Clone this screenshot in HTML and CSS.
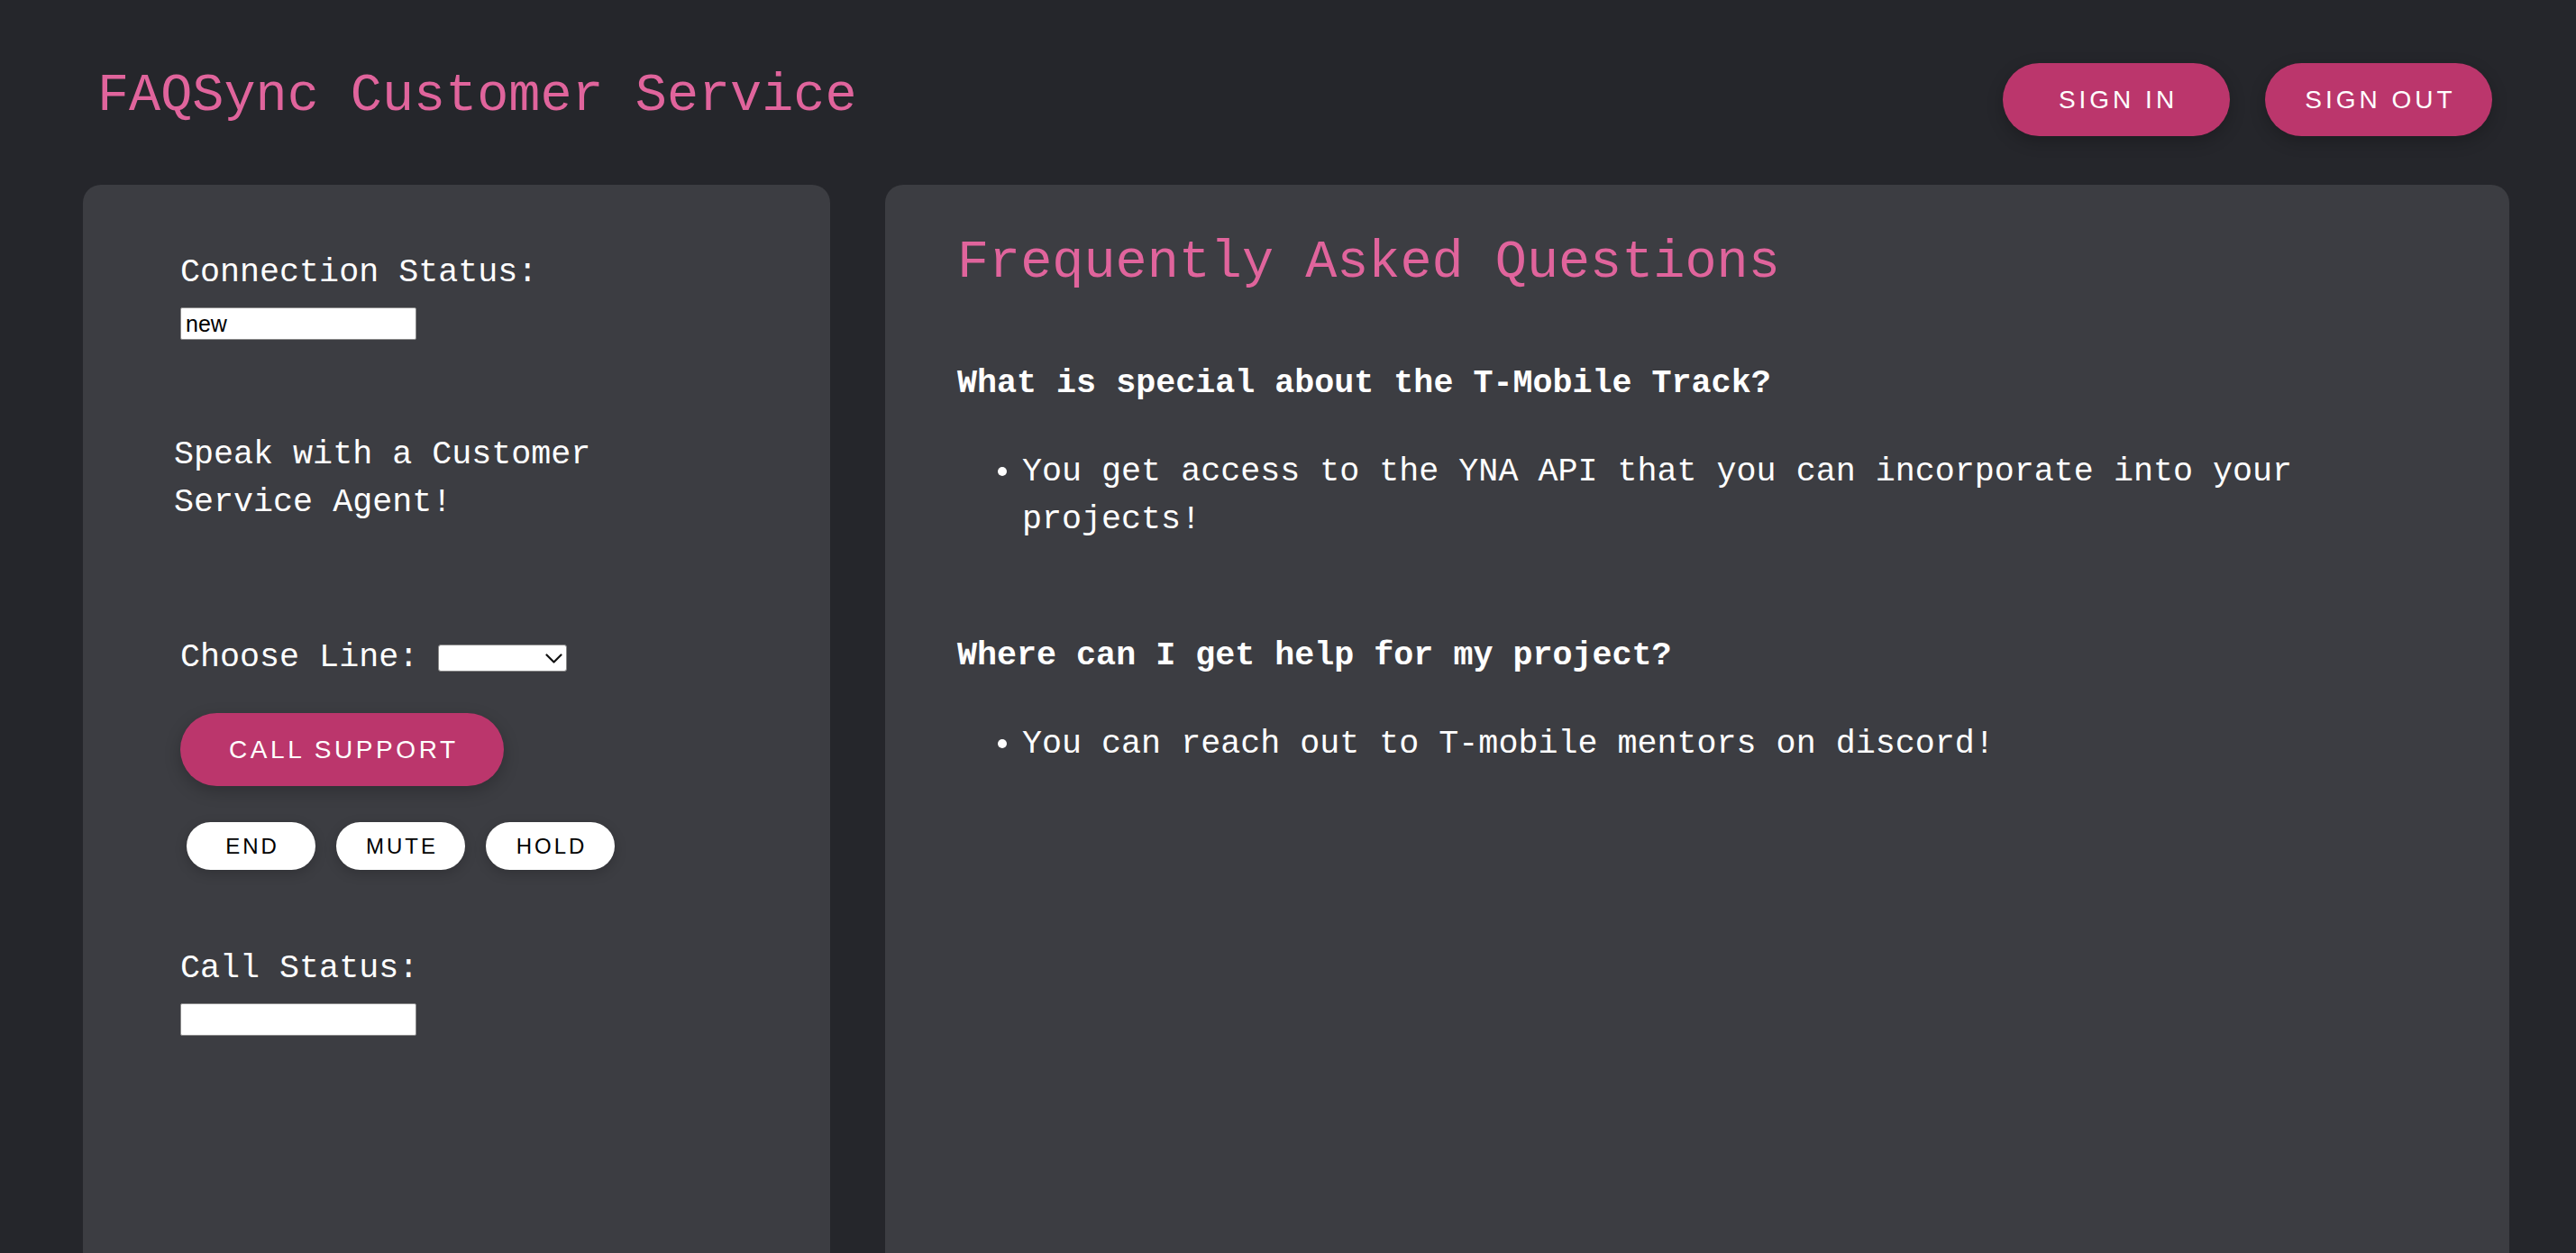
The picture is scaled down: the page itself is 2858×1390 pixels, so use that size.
FILE: index.html
```html
<!DOCTYPE html>
<html lang="en">
<head>
<meta charset="utf-8">
<title>FAQSync Customer Service</title>
<link rel="stylesheet" href="styles.css">
</head>
<body>
<div class="app">
  <header class="topbar">
    <h1 class="brand">FAQSync Customer Service</h1>
    <div class="auth">
      <button class="pill pill-pink pill-auth">SIGN IN</button>
      <button class="pill pill-pink pill-auth">SIGN OUT</button>
    </div>
  </header>
  <main class="content">
    <section class="panel panel-call">
      <label class="label label-first">Connection Status:</label>
      <input class="status-input" type="text" value="new" readonly>
      <p class="speak">Speak with a Customer Service Agent!</p>
      <div class="line-row">
        <label class="label">Choose Line:</label>
        <div class="select-wrap">
          <select class="line-select"><option></option></select>
          <svg class="select-chevron" width="19" height="11" viewBox="0 0 19 11" aria-hidden="true">
            <path d="M1.5 1.5 L9.5 9.5 L17.5 1.5" fill="none" stroke="#111" stroke-width="2.2" stroke-linecap="round" stroke-linejoin="round"/>
          </svg>
        </div>
      </div>
      <button class="pill pill-pink pill-call">CALL SUPPORT</button>
      <div class="call-controls">
        <button class="pill pill-white">END</button>
        <button class="pill pill-white">MUTE</button>
        <button class="pill pill-white">HOLD</button>
      </div>
      <label class="label label-call-status">Call Status:</label>
      <input class="status-input status-input-call" type="text" value="" readonly>
    </section>
    <section class="panel panel-faq">
      <h2 class="faq-title">Frequently Asked Questions</h2>
      <div class="faq-item">
        <h3 class="question">What is special about the T-Mobile Track?</h3>
        <ul class="answers">
          <li>You get access to the YNA API that you can incorporate into your projects!</li>
        </ul>
      </div>
      <div class="faq-item">
        <h3 class="question">Where can I get help for my project?</h3>
        <ul class="answers">
          <li>You can reach out to T-mobile mentors on discord!</li>
        </ul>
      </div>
    </section>
  </main>
</div>
</body>
</html>
```

FILE: styles.css
```css
* {
  box-sizing: border-box;
}

html, body {
  margin: 0;
  padding: 0;
  background: #25262b;
  overflow: hidden;
}

body {
  font-family: "Liberation Mono", "DejaVu Sans Mono", monospace;
  color: #ffffff;
}

.app {
  margin: 0 74px 0 92px;
}

.topbar {
  height: 205px;
  display: flex;
  justify-content: space-between;
  align-items: flex-start;
  padding: 70px 19px 0 16px;
}

.brand {
  margin: 2px 0 0;
  font-size: 58.5px;
  line-height: 70px;
  font-weight: 400;
  color: #e0649c;
}

.auth {
  display: flex;
  gap: 39px;
}

.pill {
  border: none;
  border-radius: 999px;
  font-family: "Liberation Sans", Arial, sans-serif;
  cursor: pointer;
  display: flex;
  align-items: center;
  justify-content: center;
  padding: 0;
}

.pill-pink {
  background: #bb366c;
  color: #ffffff;
  box-shadow: 0 6px 18px rgba(0, 0, 0, 0.22);
}

.pill-auth {
  width: 252px;
  height: 81px;
  font-size: 28px;
  letter-spacing: 4px;
  text-indent: 4px;
}

.content {
  display: flex;
  gap: 61px;
  align-items: flex-start;
}

.panel {
  background: #3c3d42;
  border-radius: 20px;
  height: 1300px;
}

.panel-call {
  width: 829px;
  flex: none;
  padding: 71px 108px 0;
  display: flex;
  flex-direction: column;
  align-items: flex-start;
}

.label {
  font-size: 36.7px;
  line-height: 53px;
  display: block;
}

.status-input {
  display: block;
  margin-top: 12px;
  width: 262px;
  height: 36px;
  background: #ffffff;
  border: 1px solid #8a8a8a;
  border-radius: 2px;
  font-family: "Liberation Sans", Arial, sans-serif;
  font-size: 25px;
  color: #000000;
  padding: 0 5px;
  outline: none;
}

.speak {
  margin: 101px 0 0 -7px;
  max-width: 600px;
  font-size: 36.7px;
  line-height: 53px;
}

.line-row {
  margin-top: 119px;
  display: flex;
  align-items: center;
  gap: 22px;
}

.select-wrap {
  position: relative;
  width: 143px;
  height: 30px;
}

.line-select {
  display: block;
  width: 143px;
  height: 30px;
  background: #ffffff;
  border: 1px solid #8a8a8a;
  border-radius: 3px;
  font-size: 20px;
  color: #000000;
  -webkit-appearance: none;
  appearance: none;
}

.select-chevron {
  position: absolute;
  right: 5px;
  top: 10px;
  pointer-events: none;
}

.pill-call {
  margin-top: 35px;
  width: 359px;
  height: 81px;
  font-size: 28px;
  letter-spacing: 3.6px;
  text-indent: 3.6px;
}

.call-controls {
  margin: 40px 0 0 7px;
  display: flex;
  gap: 23px;
}

.pill-white {
  width: 143px;
  height: 53px;
  background: #ffffff;
  color: #000000;
  font-size: 24px;
  letter-spacing: 3px;
  text-indent: 3px;
  box-shadow: 0 4px 14px rgba(0, 0, 0, 0.18);
}

.label-call-status {
  margin-top: 83px;
}

.status-input-call {
  margin-top: 12px;
}

.panel-faq {
  flex: 1;
  padding: 52px 80px 0;
}

.faq-title {
  margin: 0;
  font-size: 58.5px;
  line-height: 70px;
  font-weight: 400;
  color: #e0649c;
}

.faq-item {
  margin-top: 72px;
}

.faq-item + .faq-item {
  margin-top: 98px;
}

.question {
  margin: 0;
  font-size: 36.7px;
  line-height: 53px;
  font-weight: 700;
}

.answers {
  margin: 45px 0 0;
  padding-left: 72px;
  list-style: disc;
}

.answers li {
  font-size: 36.7px;
  line-height: 53px;
}
```
